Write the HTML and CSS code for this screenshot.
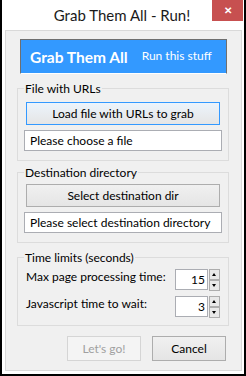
FILE: index.html
```html
<!DOCTYPE html>
<html lang="en">
<head>
    <meta name="viewport" content="width=device-width, initial-scale=1">
    <title>Grab Them All - Run!</title>
    <link rel="stylesheet" href="styles.css">
</head>

<body>

    <div class="window">
        <div class="titlebar">
            <span class="title">Grab Them All - Run!</span>
            <span class="close">&#x2715;</span>
        </div>

        <div class="client">
            <div class="banner">
                <span class="brand">Grab Them All</span>
                <span class="tagline">Run this stuff</span>
            </div>

            <fieldset class="group group-file">
                <legend>File with URLs</legend>
                <button class="btn btn-default">Load file with URLs to grab</button>
                <div class="field">Please choose a file</div>
            </fieldset>

            <fieldset class="group group-dir">
                <legend>Destination directory</legend>
                <button class="btn">Select destination dir</button>
                <div class="field">Please select destination directory</div>
            </fieldset>

            <fieldset class="group group-time">
                <legend>Time limits (seconds)</legend>
                <div class="row">
                    <label>Max page processing time:</label>
                    <div class="spin">
                        <div class="spin-value">15</div>
                        <div class="spin-arrows">
                            <span class="arrow up"></span>
                            <span class="arrow down"></span>
                        </div>
                    </div>
                </div>
                <div class="row">
                    <label>Javascript time to wait:</label>
                    <div class="spin">
                        <div class="spin-value">3</div>
                        <div class="spin-arrows">
                            <span class="arrow up"></span>
                            <span class="arrow down"></span>
                        </div>
                    </div>
                </div>
            </fieldset>

            <div class="actions">
                <button class="btn btn-action" disabled>Let's go!</button>
                <button class="btn btn-action">Cancel</button>
            </div>
        </div>
    </div>

</body>
</html>
```

FILE: styles.css
```css
body {
    margin: 0;
    font-family: 'Lato', 'Liberation Sans', sans-serif;
    font-size: 12px;
    color: #000;
    background: #fff;
}

.window {
    width: 242px;
    height: 374px;
    border: 2px solid #000;
    border-top: none;
    background: #fff;
}

.titlebar {
    height: 30px;
    display: flex;
    justify-content: center;
    position: relative;
}

.title {
    font-size: 15px;
    line-height: 30px;
    color: #1a1a1a;
    margin-right: 2px;
}

.close {
    position: absolute;
    top: 0;
    right: 1px;
    width: 31px;
    height: 21px;
    background: #c75050;
    color: #fff;
    font-size: 10px;
    font-weight: bold;
    line-height: 21px;
    text-align: center;
}

.client {
    margin-left: 3px;
    width: 235px;
    height: 339px;
    border: 1px solid #d9d9d9;
    background: #f0f0f0;
}

.banner {
    margin: 8px 0 0 14px;
    width: 196px;
    height: 33px;
    border: 1px solid #6f6f6f;
    border-bottom-color: #fff;
    background: #3399ff;
    color: #fff;
    display: flex;
    align-items: center;
    padding-left: 9px;
    box-sizing: content-box;
}

.brand {
    font-size: 15.5px;
    font-weight: bold;
    margin-right: 14px;
}

.tagline {
    font-size: 12px;
    margin-top: -3px;
}

.group {
    margin: 7px 12px 0 11px;
    padding: 0 6px 9px;
    border: 1px solid #dcdcdc;
}

.group legend {
    padding: 0 1px;
    line-height: 15px;
    color: #000;
}

.group-dir {
    margin-top: 4px;
}

.group-time {
    margin-top: 7px;
    padding-bottom: 7px;
}

.btn {
    display: block;
    font-family: inherit;
    font-size: 12px;
    color: #000;
    border: 1px solid #adadad;
    background: linear-gradient(#f0f0f0, #e5e5e5);
    border-radius: 0;
    padding: 0;
    cursor: pointer;
}

.group .btn {
    width: 194px;
    height: 23px;
    margin: 6px 2px 0;
}

.group-dir .btn {
    margin-top: 4px;
}

.btn-default {
    border-color: #3399ff;
    background: linear-gradient(#ecf4fc, #e5e5e5);
}

.field {
    margin-top: 5px;
    height: 19px;
    border: 1px solid #abadb3;
    background: #fff;
    line-height: 19px;
    padding-left: 5px;
    white-space: nowrap;
}

.row {
    display: flex;
    justify-content: space-between;
    align-items: flex-start;
    margin-top: 4px;
    padding-left: 2px;
}

.row + .row {
    margin-top: 5px;
}

.row label {
    line-height: 15px;
    margin-top: 0;
    white-space: nowrap;
}

.spin {
    display: flex;
    margin-right: 2px;
}

.spin-value {
    width: 29px;
    height: 19px;
    border: 1px solid #abadb3;
    background: #fff;
    text-align: right;
    line-height: 19px;
    padding-right: 2px;
}

.spin-arrows {
    display: flex;
    flex-direction: column;
    margin-left: 1px;
}

.arrow {
    width: 9px;
    height: 9px;
    border: 1px solid #adadad;
    background: #e8e8e8;
    position: relative;
}

.arrow::after {
    content: "";
    position: absolute;
    left: 2px;
    border-left: 2.5px solid transparent;
    border-right: 2.5px solid transparent;
}

.up::after {
    top: 3px;
    border-bottom: 3px solid #000;
}

.down::after {
    top: 3px;
    border-top: 3px solid #000;
}

.actions {
    display: flex;
    justify-content: flex-end;
    gap: 11px;
    margin: 10px 15px 0 0;
}

.btn-action {
    width: 74px;
    height: 25px;
}

.btn-action:disabled {
    color: #a0a0a0;
    border-color: #d5d5d5;
    background: #f4f4f4;
    cursor: default;
}
```
